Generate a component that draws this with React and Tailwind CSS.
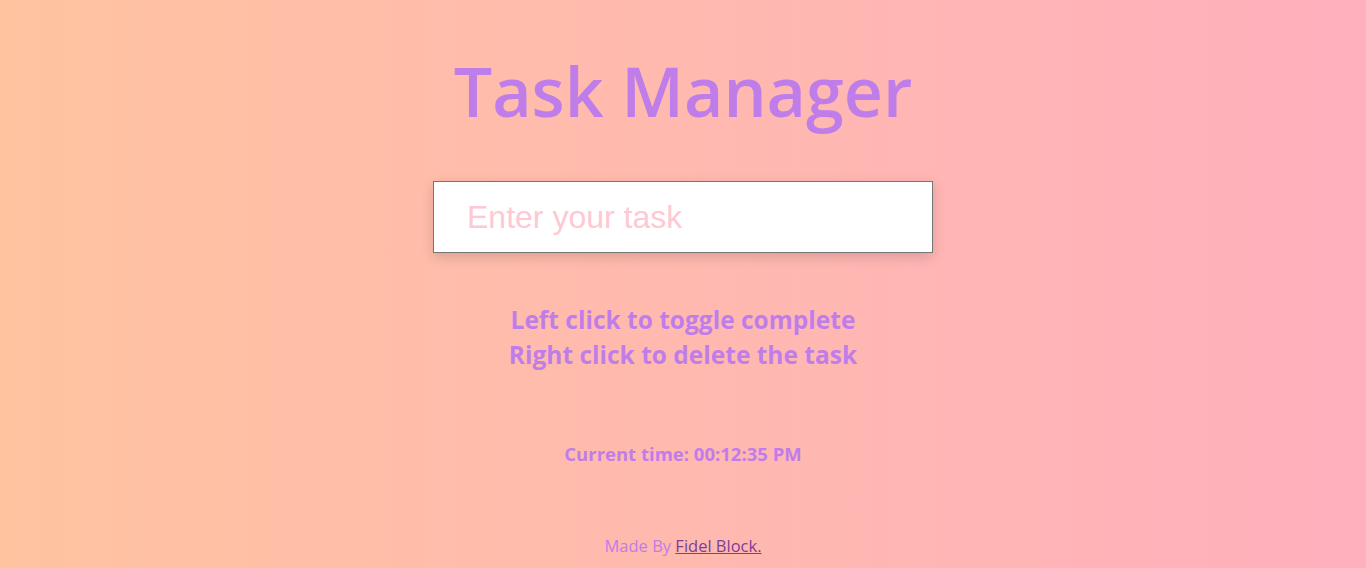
export default function App() {
  return (
    <div className="min-h-[568px] w-full bg-gradient-to-r from-[#ffc3a0] to-[#ffafbd] flex flex-col items-center font-['Open_Sans',sans-serif] text-[#bf7de9]">
      <h1 className="mt-[49px] text-[68px] leading-[84px] font-semibold">Task Manager</h1>
      <input
        type="text"
        placeholder="Enter your task"
        className="mt-[48px] w-[500px] h-[72px] bg-white border border-[#767676] pl-[33px] text-[32px] font-['Liberation_Sans',sans-serif] placeholder:text-[#ffc8d2] shadow-[0_4px_12px_rgba(0,0,0,0.15)] outline-none"
      />
      <div className="mt-[49px] text-center text-[24.5px] leading-[35px] font-bold">
        <p>Left click to toggle complete</p>
        <p>Right click to delete the task</p>
      </div>
      <p className="mt-[68px] text-[18.5px] leading-[27px] font-bold">Current time: 00:12:35 PM</p>
      <p className="mt-[68px] text-[16.5px] leading-[22px]">
        Made By <a href="#" className="underline text-[#7b3f98]">Fidel Block.</a>
      </p>
    </div>
  );
}
